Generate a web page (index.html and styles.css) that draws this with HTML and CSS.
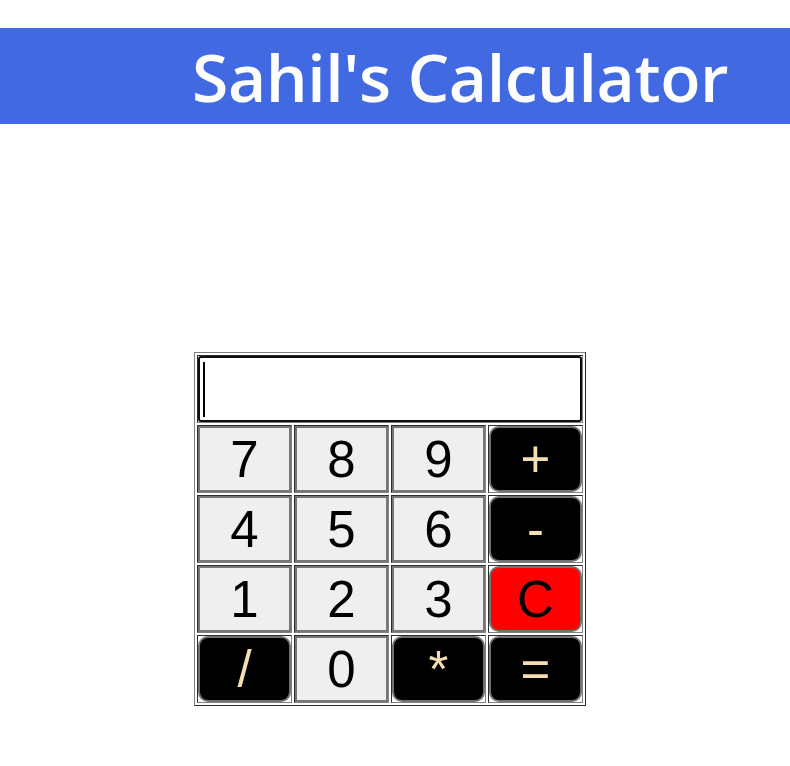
FILE: index.html
```html
<!DOCTYPE html>
<html>
<head>
<meta charset="utf-8">
<title>Sahil's Calculator</title>
<link rel="stylesheet" href="styles.css">
</head>
<body>
<h1 class="title">Sahil's Calculator</h1>
<table class="calc">
  <tr>
    <td colspan="4"><div class="display"><span class="caret"></span></div></td>
  </tr>
  <tr>
    <td><button class="key num">7</button></td>
    <td><button class="key num">8</button></td>
    <td><button class="key num">9</button></td>
    <td><button class="key op">+</button></td>
  </tr>
  <tr>
    <td><button class="key num">4</button></td>
    <td><button class="key num">5</button></td>
    <td><button class="key num">6</button></td>
    <td><button class="key op">-</button></td>
  </tr>
  <tr>
    <td><button class="key num">1</button></td>
    <td><button class="key num">2</button></td>
    <td><button class="key num">3</button></td>
    <td><button class="key op clear">C</button></td>
  </tr>
  <tr>
    <td><button class="key op">/</button></td>
    <td><button class="key num">0</button></td>
    <td><button class="key op">*</button></td>
    <td><button class="key op">=</button></td>
  </tr>
</table>
</body>
</html>
```
FILE: styles.css
```css
html, body {
  margin: 0;
  padding: 0;
  background: #ffffff;
}

.title {
  margin: 28px 0 0 0;
  height: 96px;
  line-height: 96px;
  padding-left: 192px;
  background: #4169e1;
  color: #ffffff;
  font-family: "Open Sans", "Noto Sans", sans-serif;
  font-weight: 600;
  font-size: 66px;
  letter-spacing: -0.4px;
  white-space: nowrap;
  box-sizing: border-box;
}

.calc {
  margin: 228px 0 0 194px;
  border: 1px outset #808080;
  border-spacing: 2px;
  border-collapse: separate;
}

.calc td {
  padding: 0;
  border: 1px inset #808080;
  width: 93px;
  height: 66px;
}

.display {
  box-sizing: border-box;
  height: 66px;
  width: 100%;
  border: 2px solid #101010;
  border-radius: 3px;
  background: #fff;
  padding: 4px 0 0 3px;
}

.caret {
  display: block;
  width: 2px;
  height: 55px;
  background: #000;
}

.key {
  display: block;
  box-sizing: border-box;
  width: 93px;
  height: 66px;
  margin: 0;
  padding: 0;
  font-family: "Liberation Sans", Arial, sans-serif;
  font-size: 51px;
  line-height: 1;
}

.num {
  background: #efefef;
  color: #000;
  border: 2px solid #767676;
  border-radius: 0;
}

.op {
  background: #000;
  color: #f5deb3;
  border: 2px solid #727272;
  border-radius: 10px;
}

.op.clear {
  background: #ff0000;
  color: #000;
}
```
